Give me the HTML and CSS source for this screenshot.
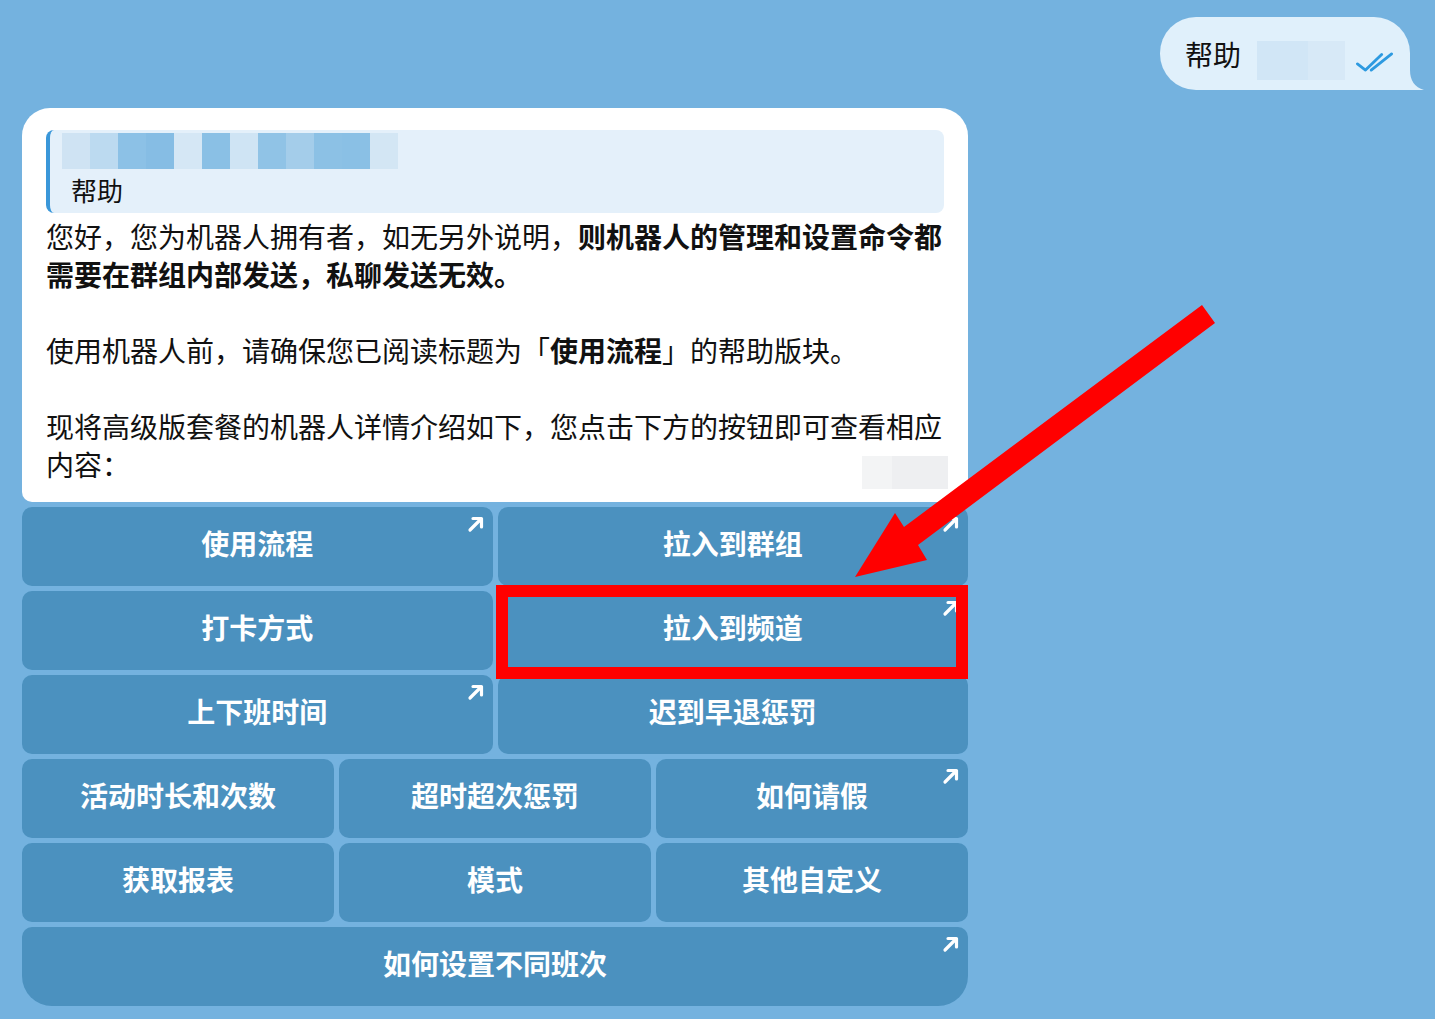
FILE: index.html
```html
<!DOCTYPE html>
<html lang="zh-CN">
<head>
<meta charset="utf-8">
<title>帮助</title>
<link rel="stylesheet" href="styles.css">
</head>
<body>
<div class="chat">
  <div class="row-out">
    <div class="bubble-out">
      <span class="out-text">帮助</span>
      <span class="out-hidden"></span>
      <svg class="ticks" viewBox="0 0 40 22" width="40" height="22" aria-hidden="true">
        <path d="M1.5 13 L10 19.5 L27 3" fill="none" stroke="#2d9ae0" stroke-width="3" stroke-linecap="round" stroke-linejoin="round"/>
        <path d="M16 19.5 L37.5 2.5" fill="none" stroke="#2d9ae0" stroke-width="3" stroke-linecap="round"/>
      </svg>
      <svg class="tail-out" viewBox="0 0 20 20" width="20" height="20" aria-hidden="true">
        <path d="M0 0 H6 Q6 16 20 20 H0 Z" fill="#e0f0fb"/>
      </svg>
    </div>
  </div>

  <div class="msg">
    <div class="bubble-in">
      <div class="quote">
        <div class="quote-name">
          <span class="px c1"></span><span class="px c2"></span><span class="px c3"></span><span class="px c4"></span>
          <span class="px c5"></span><span class="px c6"></span><span class="px c7"></span><span class="px c8"></span>
          <span class="px c9"></span><span class="px c10"></span><span class="px c11"></span><span class="px c12"></span>
        </div>
        <div class="quote-text">帮助</div>
      </div>
      <div class="body">
        <p>您好，您为机器人拥有者，如无另外说明，<b>则机器人的管理和设置命令都</b><b>需要在群组内部发送，私聊发送无效。</b></p>
        <p>使用机器人前，请确保您已阅读标题为「<b>使用流程</b>」的帮助版块。</p>
        <p>现将高级版套餐的机器人详情介绍如下，您点击下方的按钮即可查看相应内容：</p>
      </div>
      <span class="meta"></span>
    </div>

    <div class="kb kb-2">
      <div class="btn">使用流程<svg class="ext" viewBox="0 0 18 18" width="18" height="18"><path d="M3 15 L14 4 M6 3.5 H14.5 V12" fill="none" stroke="#fff" stroke-width="3.2" stroke-linecap="round" stroke-linejoin="round"/></svg></div>
      <div class="btn">拉入到群组<svg class="ext" viewBox="0 0 18 18" width="18" height="18"><path d="M3 15 L14 4 M6 3.5 H14.5 V12" fill="none" stroke="#fff" stroke-width="3.2" stroke-linecap="round" stroke-linejoin="round"/></svg></div>
      <div class="btn">打卡方式</div>
      <div class="btn">拉入到频道<svg class="ext" viewBox="0 0 18 18" width="18" height="18"><path d="M3 15 L14 4 M6 3.5 H14.5 V12" fill="none" stroke="#fff" stroke-width="3.2" stroke-linecap="round" stroke-linejoin="round"/></svg><span class="mark"></span></div>
      <div class="btn">上下班时间<svg class="ext" viewBox="0 0 18 18" width="18" height="18"><path d="M3 15 L14 4 M6 3.5 H14.5 V12" fill="none" stroke="#fff" stroke-width="3.2" stroke-linecap="round" stroke-linejoin="round"/></svg></div>
      <div class="btn">迟到早退惩罚</div>
    </div>
    <div class="kb kb-3">
      <div class="btn">活动时长和次数</div>
      <div class="btn">超时超次惩罚</div>
      <div class="btn">如何请假<svg class="ext" viewBox="0 0 18 18" width="18" height="18"><path d="M3 15 L14 4 M6 3.5 H14.5 V12" fill="none" stroke="#fff" stroke-width="3.2" stroke-linecap="round" stroke-linejoin="round"/></svg></div>
      <div class="btn">获取报表</div>
      <div class="btn">模式</div>
      <div class="btn">其他自定义</div>
    </div>
    <div class="kb kb-1">
      <div class="btn btn-last">如何设置不同班次<svg class="ext" viewBox="0 0 18 18" width="18" height="18"><path d="M3 15 L14 4 M6 3.5 H14.5 V12" fill="none" stroke="#fff" stroke-width="3.2" stroke-linecap="round" stroke-linejoin="round"/></svg></div>
    </div>
  </div>
</div>

<svg class="pointer" viewBox="0 0 1435 1019" width="1435" height="1019" aria-hidden="true">
  <polygon points="1202,305 1215,323 918,545 927,560 855,577 895,513 904,527" fill="#ff0000"/>
</svg>
</body>
</html>
```

FILE: styles.css
```css
* {
  box-sizing: border-box;
}

html,
body {
  margin: 0;
  padding: 0;
}

body {
  width: 1435px;
  height: 1019px;
  overflow: hidden;
  background: #74b2df;
  font-family: "Noto Sans CJK SC", "Noto Sans", sans-serif;
  color: #111;
  position: relative;
}

.chat {
  display: flex;
  flex-direction: column;
  padding-top: 17px;
}

/* outgoing message */
.row-out {
  display: flex;
  justify-content: flex-end;
  padding-right: 25px;
}

.bubble-out {
  position: relative;
  display: flex;
  align-items: center;
  height: 73px;
  padding: 0 16px 0 25px;
  background: #e0f0fb;
  border-radius: 36px 36px 0 36px;
}

.out-text {
  font-size: 28px;
  line-height: 38px;
  color: #111;
}

.out-hidden {
  align-self: flex-end;
  margin: 0 11px 10px 16px;
  width: 88px;
  height: 39px;
  background: linear-gradient(90deg, #d1e6f6 0 58%, #d7e9f7 58% 100%);
}

.ticks {
  align-self: flex-end;
  margin-bottom: 17px;
  width: 38px;
}

.tail-out {
  position: absolute;
  right: -14px;
  bottom: 0;
}

/* incoming message with keyboard */
.msg {
  width: 946px;
  margin: 18px 0 0 22px;
  display: flex;
  flex-direction: column;
  gap: 5px;
}

.bubble-in {
  position: relative;
  background: #fff;
  border-radius: 28px 28px 10px 10px;
  padding: 22px 24px 19px;
}

.quote {
  background: #e4f0fa;
  border-left: 4px solid #3a97d9;
  border-radius: 8px;
  padding: 3px 0 4px 12px;
}

.quote-name {
  display: flex;
  height: 36px;
}

.px {
  width: 28px;
  height: 36px;
}

.c1 { background: #cfe3f3; }
.c2 { background: #bcdaf0; }
.c3 { background: #8cc1e6; }
.c4 { background: #86bde4; }
.c5 { background: #d5e7f5; }
.c6 { background: #8ac0e5; }
.c7 { background: #cfe4f4; }
.c8 { background: #90c3e6; }
.c9 { background: #a4cdea; }
.c10 { background: #8cc1e5; }
.c11 { background: #8ac0e5; }
.c12 { background: #d3e6f4; }

.quote-text {
  margin-top: 3px;
  padding-left: 9px;
  font-size: 26px;
  line-height: 36px;
  padding-bottom: 1px;
  color: #111;
}

.body {
  margin-top: 4px;
  font-size: 28px;
  line-height: 38px;
}

.body p {
  margin: 0 0 38px;
}

.body p:last-child {
  margin-bottom: 0;
}

.body b {
  font-weight: 700;
}

.meta {
  position: absolute;
  right: 20px;
  bottom: 13px;
  width: 86px;
  height: 33px;
  background: linear-gradient(90deg, #f3f4f5 0 35%, #eeeff1 35% 100%);
}

/* inline keyboard */
.kb {
  display: grid;
  gap: 5px;
  grid-auto-rows: 79px;
}

.kb-2 {
  grid-template-columns: 1fr 1fr;
}

.kb-3 {
  grid-template-columns: 1fr 1fr 1fr;
}

.kb-1 {
  grid-template-columns: 1fr;
}

.btn {
  position: relative;
  display: flex;
  align-items: center;
  justify-content: center;
  padding-bottom: 7px;
  background: #4b91bf;
  border-radius: 10px;
  color: #fff;
  font-size: 28px;
  font-weight: 700;
  line-height: 38px;
}

.btn-last {
  border-radius: 10px 10px 30px 30px;
}

.ext {
  position: absolute;
  top: 8px;
  right: 8px;
}

.mark {
  position: absolute;
  top: -6px;
  left: -2px;
  right: 0;
  bottom: -9px;
  border: 12px solid #ff0000;
  z-index: 5;
}

.pointer {
  position: absolute;
  top: 0;
  left: 0;
  z-index: 10;
  pointer-events: none;
}
```
